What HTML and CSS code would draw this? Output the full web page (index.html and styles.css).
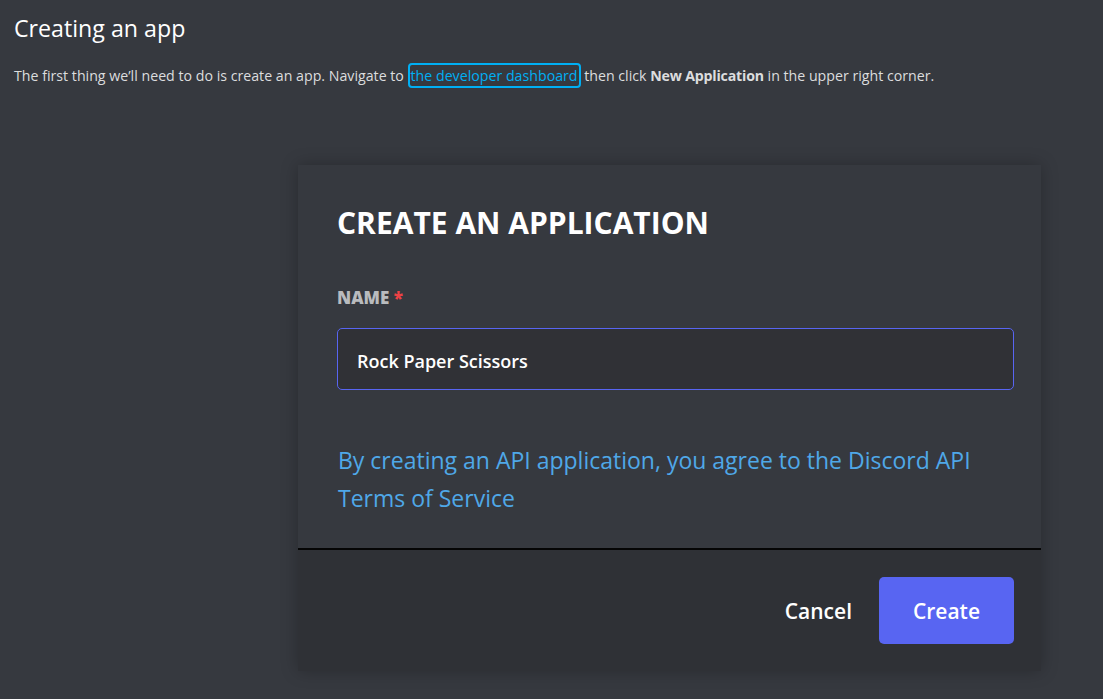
FILE: index.html
```html
<!DOCTYPE html>
<html>
<head>
<meta charset="utf-8">
<link rel="stylesheet" href="styles.css">
</head>
<body>
<div class="doc">
  <h1 class="title">Creating an app</h1>
  <p class="intro">The first thing we’ll need to do is create an app. Navigate to <a class="devlink" href="#">the developer dashboard</a> then click <b>New Application</b> in the upper right corner.</p>
</div>
<div class="modal">
  <div class="modal-body">
    <h2 class="modal-title">CREATE AN APPLICATION</h2>
    <div class="label">NAME <span class="req">*</span></div>
    <div class="input">Rock Paper Scissors</div>
    <p class="terms">By creating an API application, you agree to the Discord API Terms of Service</p>
  </div>
  <div class="modal-footer">
    <span class="cancel">Cancel</span>
    <span class="create">Create</span>
  </div>
</div>
</body>
</html>
```
FILE: styles.css
```css
html, body {
  margin: 0;
  padding: 0;
  background: #36393f;
  font-family: "Open Sans", "Noto Sans", sans-serif;
  color: #dcddde;
  height: 100%;
  overflow: hidden;
}
.doc {
  padding: 11px 0 0 14px;
}
.title {
  margin: 0;
  font-size: 23.2px;
  font-weight: 400;
  color: #ffffff;
  line-height: 34px;
}
.intro {
  margin: 20px 0 0 0;
  font-size: 14.2px;
  line-height: 22px;
  color: #dcddde;
}
.intro b { font-weight: 700; letter-spacing: -0.2px; }
.devlink {
  color: #00aff4;
  text-decoration: none;
  border: 2px solid #00aff4;
  border-radius: 4px;
  padding: 1px 1px;
}
.modal {
  margin: 78px 0 0 298px;
  width: 743px;
  box-shadow: 0 0 16px rgba(0,0,0,0.25);
}
.modal-body {
  padding: 38px 27px 36px 39px;
  height: 309px;
  border-bottom: 2px solid #050505;
}
.modal-title {
  margin: 0;
  font-size: 30px;
  font-weight: 700;
  color: #ffffff;
  line-height: 40px;
  letter-spacing: 0;
}
.label {
  margin-top: 44px;
  font-size: 17px;
  font-weight: 800;
  color: #b9bbbe;
  line-height: 22px;
}
.req { color: #ed4245; }
.input {
  margin-top: 19px;
  height: 62px;
  box-sizing: border-box;
  border: 1px solid #5865f2;
  border-radius: 5px;
  background: #303136;
  padding: 3px 19px 0 19px;
  display: flex;
  align-items: center;
  font-size: 18px;
  font-weight: 600;
  color: #ffffff;
}
.terms {
  margin: 51px 0 0 1px;
  font-size: 23px;
  line-height: 38px;
  color: #4fa8e8;
}
.modal-footer {
  background: #2f3136;
  height: 121px;
  display: flex;
  justify-content: flex-end;
  align-items: center;
  padding-right: 27px;
}
.cancel {
  font-size: 21px;
  font-weight: 600;
  color: #ffffff;
  margin-right: 27px;
}
.create {
  width: 135px;
  height: 67px;
  background: #5865f2;
  border-radius: 5px;
  display: flex;
  align-items: center;
  justify-content: center;
  font-size: 21px;
  font-weight: 600;
  color: #ffffff;
}
```
